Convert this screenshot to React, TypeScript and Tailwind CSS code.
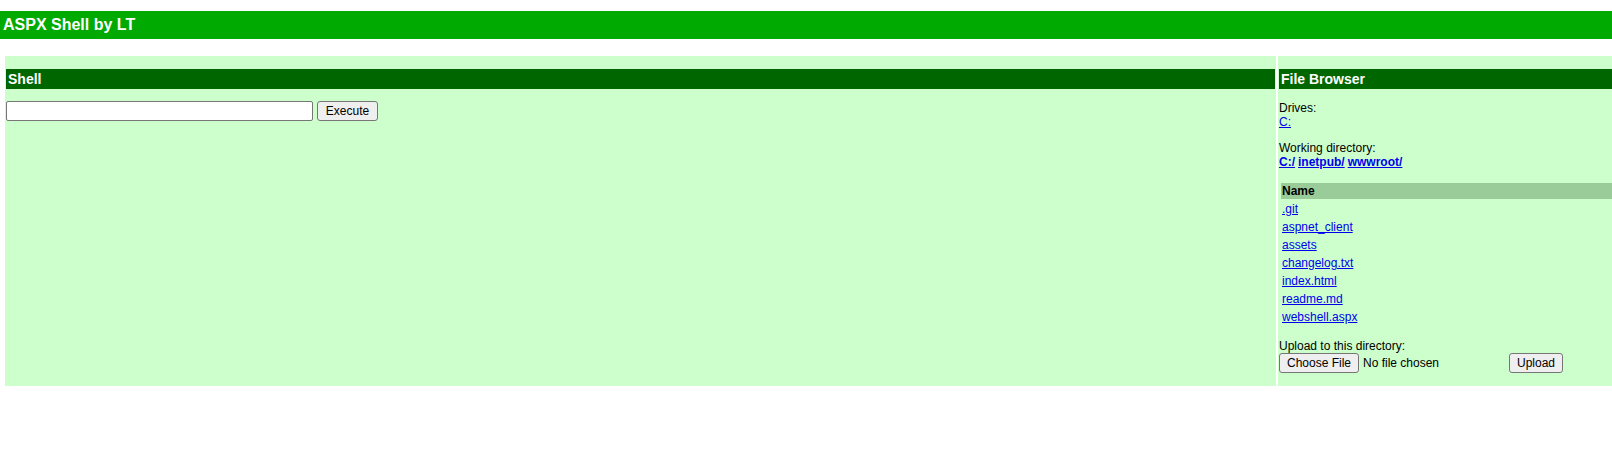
import React from 'react';

const files = ['.git', 'aspnet_client', 'assets', 'changelog.txt', 'index.html', 'readme.md', 'webshell.aspx'];

const SectionHeader: React.FC<{ title: string }> = ({ title }) => (
  <div className="mt-[12px] h-[20px] bg-[#006600] text-white font-bold text-[14px] leading-[20px] px-[2px]">{title}</div>
);

const NativeButton: React.FC<{ label: string; width: string }> = ({ label, width }) => (
  <button
    type="button"
    className={`${width} h-[20px] shrink-0 border border-[#767676] rounded-[3px] bg-[#efefef] text-[12px] leading-[18px] text-black text-center`}
  >
    {label}
  </button>
);

const Link: React.FC<{ children: React.ReactNode; bold?: boolean }> = ({ children, bold }) => (
  <a href="#" className={bold ? 'text-[#0000ee] underline font-bold' : 'text-[#0000ee] underline'}>
    {children}
  </a>
);

export default function App() {
  return (
    <div className="w-[1612px] h-[475px] overflow-hidden bg-white text-black text-[12px] leading-[14px] font-['Liberation_Sans',Arial,sans-serif]">
      <div className="mt-[11px] h-[28px] bg-[#00aa00] text-white font-bold text-[16px] leading-[28px] px-[3px]">ASPX Shell by LT</div>

      <div className="mt-[17px] ml-[5px] flex gap-[2px]">
        {/* Shell */}
        <div className="w-[1271px] shrink-0 bg-[#ccffcc] p-[1px]">
          <SectionHeader title="Shell" />
          <div className="mt-[12px] flex items-center gap-[4px]">
            <input type="text" className="w-[307px] h-[20px] border border-[#767676] rounded-[2px] bg-white px-[2px] text-[13.33px]" />
            <NativeButton label="Execute" width="w-[61px]" />
          </div>
        </div>

        {/* File browser */}
        <div className="w-[640px] shrink-0 bg-[#ccffcc] p-[1px] pb-[13px]">
          <SectionHeader title="File Browser" />

          <div className="mt-[12px]">
            <div>Drives:</div>
            <div><Link>C:</Link></div>
          </div>

          <div className="mt-[12px]">
            <div>Working directory:</div>
            <div className="flex gap-[3px]">
              <Link bold>C:/</Link>
              <Link bold>inetpub/</Link>
              <Link bold>wwwroot/</Link>
            </div>
          </div>

          <div className="mt-[12px] flex flex-col gap-[2px] p-[2px]">
            <div className="h-[16px] bg-[#99cc99] font-bold px-[1px] py-[1px]">Name</div>
            {files.map((f) => (
              <div key={f} className="h-[16px] px-[1px] py-[1px]">
                <Link>{f}</Link>
              </div>
            ))}
          </div>

          <div className="mt-[12px]">
            <div>Upload to this directory:</div>
            <div className="flex items-center">
              <div className="w-[230px] flex items-center gap-[4px]">
                <NativeButton label="Choose File" width="w-[80px]" />
                <span>No file chosen</span>
              </div>
              <NativeButton label="Upload" width="w-[54px]" />
            </div>
          </div>
        </div>
      </div>
    </div>
  );
}
